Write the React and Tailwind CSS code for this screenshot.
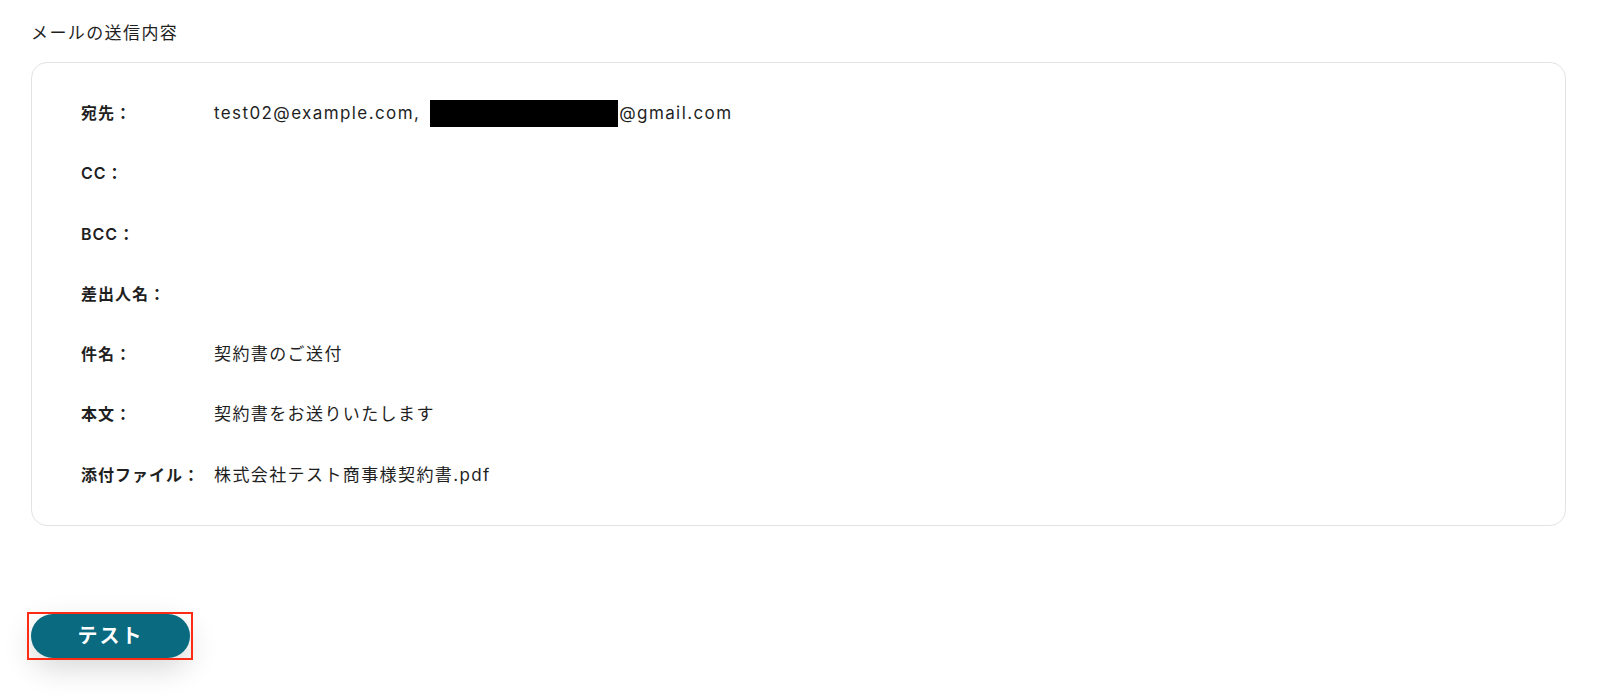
import React from 'react';

const rows = [
  { label: '宛先：', value: 'to' },
  { label: 'CC：', value: '' },
  { label: 'BCC：', value: '' },
  { label: '差出人名：', value: '' },
  { label: '件名：', value: '契約書のご送付' },
  { label: '本文：', value: '契約書をお送りいたします' },
  { label: '添付ファイル：', value: '株式会社テスト商事様契約書.pdf' },
];

const App = () => {
  return (
    <div
      className="min-h-[695px] bg-white pl-[31px] pr-[34px] pt-[21px] text-[#1f1f1f]"
      style={{ fontFamily: 'Inter, "Noto Sans CJK JP", sans-serif' }}
    >
      {/* 見出し */}
      <h2 className="text-[17px] leading-6 tracking-[1.4px]">メールの送信内容</h2>

      {/* メール内容カード */}
      <div className="mt-[17px] rounded-2xl border border-[#e3e3e3] pl-[49px] pt-[37px] pb-[37px]">
        <div className="flex flex-col gap-[34.25px]">
          {rows.map((row) => (
            <div key={row.label} className="flex items-center h-[26px] text-[17px] leading-[26px] tracking-[1.4px]">
              <span className="w-[133px] shrink-0 font-semibold text-[16px] tracking-[1px]">{row.label}</span>
              {row.value === 'to' ? (
                <span className="flex items-center">
                  test02@example.com,
                  <span className="inline-block ml-[10px] mr-[1px] w-[188px] h-[27px] bg-black" />
                  @gmail.com
                </span>
              ) : (
                <span>{row.value}</span>
              )}
            </div>
          ))}
        </div>
      </div>

      {/* テストボタン */}
      <div className="mt-[88px] relative inline-block">
        <button className="w-[159px] h-[44px] rounded-full bg-[#0a6a80] text-white text-[20px] font-bold tracking-[2px] shadow-[0_10px_30px_rgba(0,0,0,0.16)]">
          テスト
        </button>
        <div className="absolute -left-1 -right-[3px] -top-[2px] -bottom-[2px] border-2 border-[#ff2a14] pointer-events-none" />
      </div>
    </div>
  );
};

export default App;
